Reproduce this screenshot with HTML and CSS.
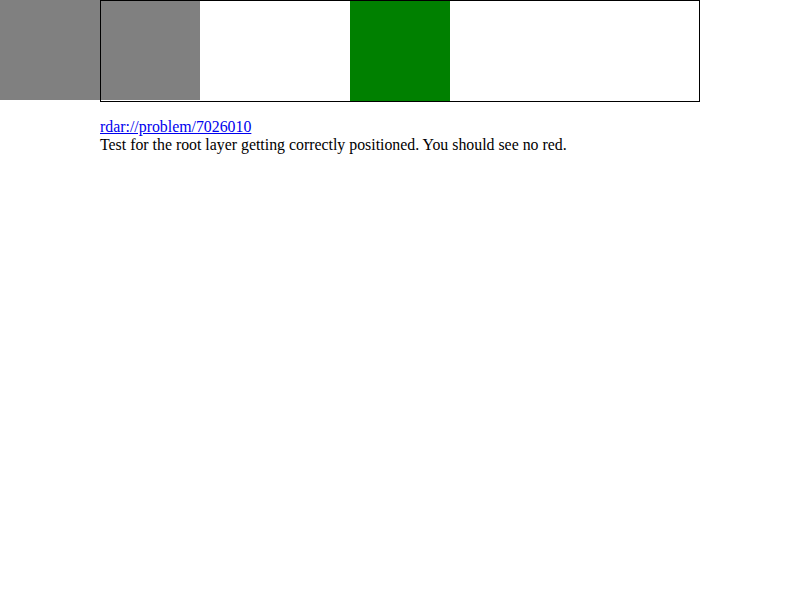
FILE: index.html
```html
<!DOCTYPE html>
<html>
<head>
<meta charset="utf-8">
<link rel="stylesheet" href="styles.css">
</head>
<body>
<div class="gray"></div>
<div class="box"><div class="green"></div></div>
<div class="desc">
<a href="#">rdar://problem/7026010</a><br>
Test for the root layer getting correctly positioned. You should see no red.
</div>
</body>
</html>
```
FILE: styles.css
```css
html, body {
  margin: 0;
  padding: 0;
  background: #fff;
}
body {
  font-family: "Liberation Serif", serif;
  font-size: 15.85px;
  color: #000;
}
.gray {
  position: absolute;
  left: 0;
  top: 0;
  width: 200px;
  height: 100px;
  background: #808080;
}
.box {
  position: relative;
  margin-left: 100px;
  width: 598px;
  height: 100px;
  border: 1px solid #000;
}
.green {
  margin-left: 249px;
  width: 100px;
  height: 100px;
  background: #008000;
}
.desc {
  margin: 16px 0 0 100px;
  line-height: 18px;
}
.desc a {
  color: #0000ee;
}
```
